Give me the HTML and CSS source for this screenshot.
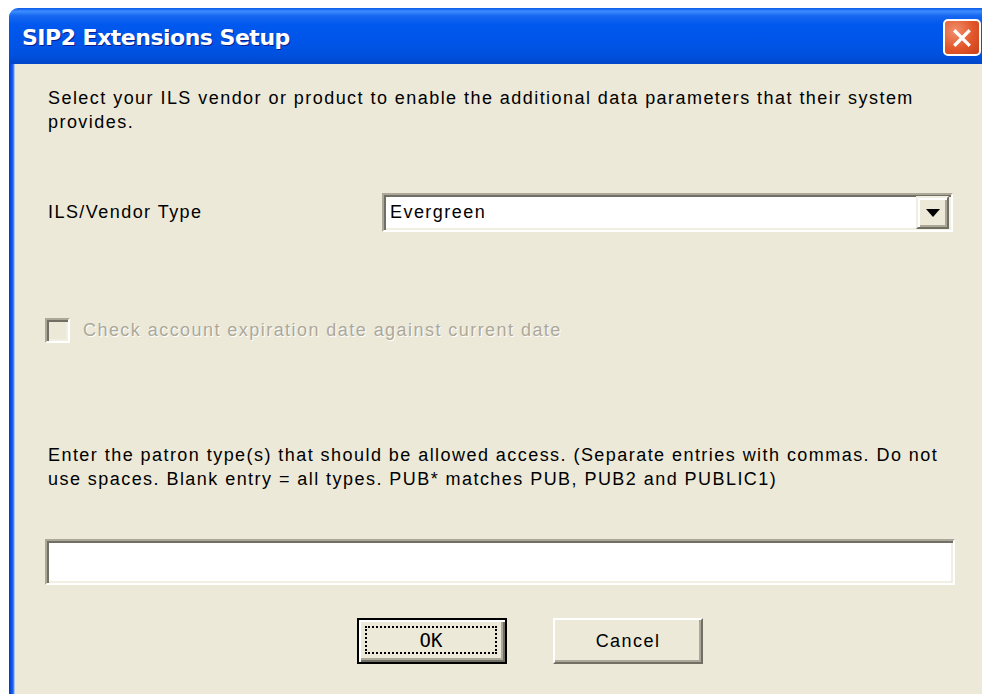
FILE: index.html
```html
<!DOCTYPE html>
<html lang="en">
<head>
<meta charset="utf-8">
<title>SIP2 Extensions Setup</title>
<link rel="stylesheet" href="styles.css">
</head>
<body>
<div class="window">
  <div class="titlebar">
    <span class="title">SIP2 Extensions Setup</span>
    <span class="close" aria-label="Close">
      <svg viewBox="0 0 20 20" width="22" height="22"><path d="M4 4 L16 16 M16 4 L4 16" stroke="#fff" stroke-width="3" stroke-linecap="square"/></svg>
    </span>
  </div>
  <div class="frame">
    <div class="client">
      <p class="intro">Select your ILS vendor or product to enable the additional data parameters that their system provides.</p>

      <div class="vendor-row">
        <span class="field-label">ILS/Vendor Type</span>
        <div class="combo">
          <span class="combo-value">Evergreen</span>
          <span class="combo-button">
            <svg viewBox="0 0 14 8" width="14" height="8"><path d="M0 0 H14 L7 8 Z" fill="#000"/></svg>
          </span>
        </div>
      </div>

      <label class="check disabled">
        <span class="check-box"></span>
        <span class="check-text">Check account expiration date against current date</span>
      </label>

      <p class="patron">Enter the patron type(s) that should be allowed access. (Separate entries with commas. Do not use spaces. Blank entry = all types. PUB* matches PUB, PUB2 and PUBLIC1)</p>

      <div class="textbox"></div>

      <div class="buttons">
        <button class="btn default"><span class="focus">OK</span></button>
        <button class="btn">Cancel</button>
      </div>
    </div>
  </div>
</div>
</body>
</html>
```

FILE: styles.css
```css
html, body {
  margin: 0;
  padding: 0;
  background: #fff;
  overflow: hidden;
  width: 982px;
  height: 694px;
}

body {
  font-family: "Liberation Sans", Arial, sans-serif;
  font-size: 18px;
  letter-spacing: 1.45px;
  color: #000;
}

/* Luna style window */
.window {
  margin: 8px 0 0 9px;
  width: 990px;
}

.titlebar {
  height: 56px;
  box-sizing: border-box;
  border-radius: 9px 9px 0 0;
  background: linear-gradient(#0a5ae8 0%, #3d8cff 6%, #1767f0 14%, #0058ee 30%, #0055e8 60%, #0050de 85%, #0046c8 100%);
  display: flex;
  align-items: center;
  padding-left: 13px;
  position: relative;
}

.title {
  color: #fff;
  font-family: "DejaVu Sans", sans-serif;
  font-weight: bold;
  font-size: 22px;
  letter-spacing: -0.5px;
  text-shadow: 1px 1px 0 #0a1e8c;
  margin-top: 2px;
}

.close {
  position: absolute;
  left: 934px;
  top: 11px;
  width: 34px;
  height: 33px;
  border: 2px solid #fff;
  border-radius: 5px;
  background: radial-gradient(circle at 30% 30%, #f0906c 0%, #e2562a 55%, #c8401a 100%);
  display: flex;
  align-items: center;
  justify-content: center;
}

.frame {
  background: linear-gradient(90deg, #0037c8 0px, #0a4de0 2px, #1e64f0 4px, #6a9cf4 5px, #ece9d8 6px);
  padding-left: 6px;
  height: 630px;
}

.client {
  background: #ece9d8;
  height: 100%;
  padding: 22px 0 0 30px;
  box-sizing: border-box;
  display: flex;
  flex-direction: column;
}

p {
  margin: 0;
}

.intro,
.patron {
  line-height: 24px;
  margin-left: 3px;
  width: 915px;
}

/* vendor selection row */
.vendor-row {
  display: grid;
  grid-template-columns: 337px 571px;
  align-items: center;
  margin-top: 59px;
}

.field-label {
  padding-left: 3px;
}

.combo {
  height: 39px;
  box-sizing: border-box;
  background: #fff;
  border-top: 2px solid #aca899;
  border-left: 2px solid #aca899;
  border-bottom: 2px solid #fff;
  border-right: 2px solid #fff;
  box-shadow: inset 2px 2px 0 #716f64, inset -2px -2px 0 #f1efe2;
  display: flex;
  align-items: center;
  justify-content: space-between;
  padding: 0 2px 0 6px;
}

.combo-button {
  width: 33px;
  height: 33px;
  box-sizing: border-box;
  background: #ece9d8;
  border-top: 2px solid #f1efe2;
  border-left: 2px solid #f1efe2;
  border-bottom: 2px solid #716f64;
  border-right: 2px solid #716f64;
  box-shadow: inset 2px 2px 0 #fff, inset -2px -2px 0 #aca899;
  display: flex;
  align-items: center;
  justify-content: center;
}

/* disabled checkbox */
.check {
  display: flex;
  align-items: center;
  margin-top: 86px;
  height: 25px;
}

.check-box {
  width: 25px;
  height: 25px;
  box-sizing: border-box;
  background: #ece9d8;
  border-top: 2px solid #aca899;
  border-left: 2px solid #aca899;
  border-bottom: 2px solid #fff;
  border-right: 2px solid #fff;
  box-shadow: inset 2px 2px 0 #716f64, inset -2px -2px 0 #f1efe2;
}

.check-text {
  margin-left: 13px;
  color: #aca899;
  text-shadow: 1px 1px 0 #fff;
}

.patron {
  margin-top: 100px;
}

.textbox {
  margin-top: 48px;
  width: 910px;
  height: 46px;
  box-sizing: border-box;
  background: #fff;
  border-top: 2px solid #aca899;
  border-left: 2px solid #aca899;
  border-bottom: 2px solid #fff;
  border-right: 2px solid #fff;
  box-shadow: inset 2px 2px 0 #716f64, inset -2px -2px 0 #f1efe2;
}

.buttons {
  display: flex;
  gap: 46px;
  margin-top: 33px;
  margin-left: 312px;
}

.btn {
  width: 150px;
  height: 46px;
  box-sizing: border-box;
  background: #ece9d8;
  font-family: "Liberation Sans", Arial, sans-serif;
  font-size: 18px;
  letter-spacing: 1.45px;
  color: #000;
  border-top: 2px solid #fff;
  border-left: 2px solid #fff;
  border-bottom: 2px solid #716f64;
  border-right: 2px solid #716f64;
  box-shadow: inset -2px -2px 0 #aca899;
  padding: 0;
  display: flex;
  align-items: center;
  justify-content: center;
}

.btn.default {
  border: 2px solid #000;
  box-shadow: inset 2px 2px 0 #fff, inset -2px -2px 0 #716f64, inset -4px -4px 0 #aca899;
  padding: 6px 8px 8px 6px;
}

.focus {
  flex: 1;
  align-self: stretch;
  display: flex;
  align-items: center;
  justify-content: center;
  border: 2px dotted #000;
  font-family: "DejaVu Sans Mono", monospace;
  font-size: 19px;
  letter-spacing: 0;
}
```
